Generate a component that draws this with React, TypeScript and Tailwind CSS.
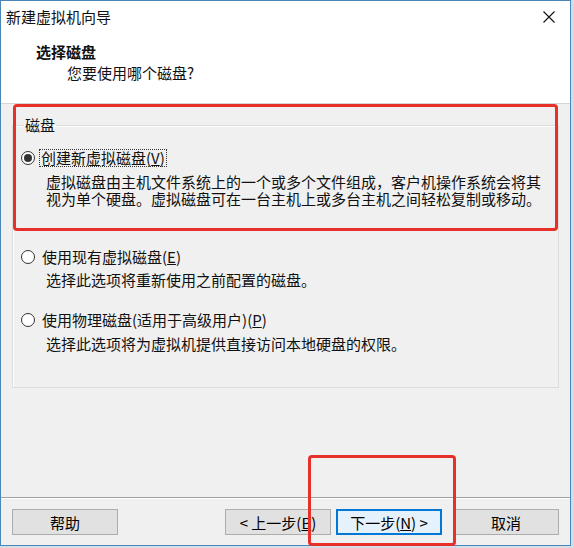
import React from "react";

const font = { fontFamily: '"Noto Sans CJK SC", "Noto Sans", sans-serif' };

function Radio({ checked }: { checked?: boolean }) {
  return (
    <span className="flex size-[14px] shrink-0 items-center justify-center rounded-full border border-[#333] bg-white">
      {checked && <span className="size-[8px] rounded-full bg-[#333]" />}
    </span>
  );
}

function Btn({ children, primary }: { children: React.ReactNode; primary?: boolean }) {
  return (
    <button
      className={
        primary
          ? "flex h-[26px] w-[106px] items-center justify-center border-2 border-[#0078d7] bg-[#e5f1fb] text-[15px] leading-none text-black"
          : "flex h-[26px] w-[106px] items-center justify-center border border-[#adadad] bg-[#e1e1e1] text-[15px] leading-none text-black"
      }
    >
      {children}
    </button>
  );
}

export default function App() {
  return (
    <div className="relative h-[548px] w-[574px] overflow-hidden bg-[#d4dde6]" style={font}>
      <div className="flex h-[546px] w-[571px] flex-col border border-[#4a86b8] bg-[#f0f0f0] text-[#111]">
        {/* title bar */}
        <div className="flex h-[30px] items-center justify-between bg-white pl-[5px] pr-[15px]">
          <span className="text-[15px] leading-none">新建虚拟机向导</span>
          <svg width="12" height="12" viewBox="0 0 12 12" className="mt-[1px]">
            <path d="M0.5 0.5 L11.5 11.5 M11.5 0.5 L0.5 11.5" stroke="#111" strokeWidth="1.1" />
          </svg>
        </div>

        {/* header */}
        <div className="h-[73px] border-b border-[#d6d6d6] bg-white pt-[11px]">
          <div className="pl-[35px] text-[15px] font-bold leading-[20px]">选择磁盘</div>
          <div className="pl-[66px] text-[15px] leading-[22px]">您要使用哪个磁盘?</div>
        </div>

        {/* body */}
        <div className="flex-1 px-[11px] pt-[12px]">
          <fieldset className="h-[272px] border border-[#dcdcdc] px-[8px] pt-[14px] shadow-[inset_1px_1px_0_#fff]">
            <legend className="ml-[3px] px-[1px] text-[15px] leading-[18px]">磁盘</legend>

            <div className="flex h-[20px] items-center gap-[4px]">
              <Radio checked />
              <span className="border border-dotted border-[#333] px-[1px] text-[15px] leading-[16px]">
                创建新虚拟磁盘(<u>V</u>)
              </span>
            </div>
            <div className="mt-[4px] pl-[25px] text-[15px] leading-[17px]">
              <div className="pt-[1px]">虚拟磁盘由主机文件系统上的一个或多个文件组成，客户机操作系统会将其</div>
              <div>视为单个硬盘。虚拟磁盘可在一台主机上或多台主机之间轻松复制或移动。</div>
            </div>

            <div className="mt-[40px] flex h-[20px] items-center gap-[7px]">
              <Radio />
              <span className="text-[15px] leading-[18px]">
                使用现有虚拟磁盘(<u>E</u>)
              </span>
            </div>
            <div className="mt-[4px] pl-[25px] text-[15px] leading-[18px]">
              选择此选项将重新使用之前配置的磁盘。
            </div>

            <div className="mt-[21px] flex h-[20px] items-center gap-[7px]">
              <Radio />
              <span className="text-[15px] leading-[18px]">
                使用物理磁盘(适用于高级用户)(<u>P</u>)
              </span>
            </div>
            <div className="mt-[5px] pl-[25px] text-[15px] leading-[18px]">
              选择此选项将为虚拟机提供直接访问本地硬盘的权限。
            </div>
          </fieldset>
        </div>

        {/* footer */}
        <div className="border-t border-[#a0a0a0] shadow-[inset_0_1px_0_#fff]">
          <div className="flex items-center px-[11px] pb-[10px] pt-[11px]">
            <Btn>帮助</Btn>
            <div className="ml-auto flex gap-[5px]">
              <Btn>&lt; 上一步(<u>B</u>)</Btn>
              <Btn primary>下一步(<u>N</u>) &gt;</Btn>
            </div>
            <div className="ml-[11px]">
              <Btn>取消</Btn>
            </div>
          </div>
        </div>
      </div>

      {/* red annotation marks */}
      <div className="pointer-events-none absolute left-[13px] top-[104px] h-[127px] w-[545px] rounded-[4px] border-[3px] border-[#e8302a]" />
      <div className="pointer-events-none absolute left-[308px] top-[455px] h-[91px] w-[148px] rounded-[4px] border-[3px] border-[#e8302a]" />
    </div>
  );
}
